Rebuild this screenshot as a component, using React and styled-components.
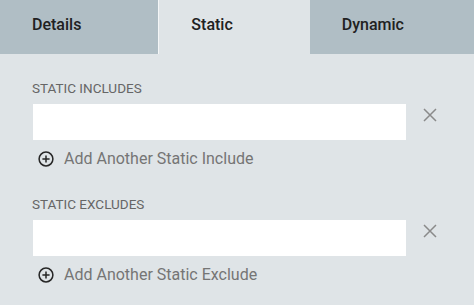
import styled, { createGlobalStyle } from "styled-components";

const Global = createGlobalStyle`
  html, body {
    margin: 0;
    padding: 0;
    background: #dfe4e7;
  }
  body {
    font-family: Roboto, "Liberation Sans", sans-serif;
  }
`;

const Page = styled.div`
  width: 474px;
  height: 305px;
  background: #dfe4e7;
  overflow: hidden;
`;

const Tabs = styled.div`
  display: flex;
  height: 54px;
`;

const Tab = styled.div`
  box-sizing: border-box;
  height: 54px;
  line-height: 50px;
  padding: 0 77px 0 32px;
  font-size: 16px;
  font-weight: 500;
  color: #212121;
  white-space: nowrap;
  background: ${(p) => (p.active ? "#dfe4e7" : "#b0bec5")};
  border-left: ${(p) => (p.active ? "1px solid #f4f6f7" : "none")};
  flex: ${(p) => (p.last ? "1" : "none")};
`;

const Body = styled.div`
  padding: 26px 37px 0 32px;
`;

const Section = styled.div`
  margin-bottom: 27px;
`;

const Label = styled.div`
  font-size: 13.5px;
  line-height: 16px;
  color: #666;
  text-transform: uppercase;
  margin-bottom: 8px;
`;

const Row = styled.div`
  display: flex;
  align-items: flex-start;
  gap: 17px;
`;

const Input = styled.input`
  box-sizing: border-box;
  flex: 1;
  height: 36px;
  margin-left: 1px;
  border: none;
  outline: none;
  background: #fff;
  padding: 0 12px;
  font-family: inherit;
  font-size: 15px;
`;

const Remove = styled.button`
  width: 14px;
  height: 24px;
  padding: 0;
  margin-top: -1px;
  border: none;
  background: none;
  display: flex;
  align-items: center;
  justify-content: center;
  cursor: pointer;
`;

const AddRow = styled.div`
  display: flex;
  align-items: center;
  gap: 10px;
  margin-top: 9px;
  padding-left: 6px;
  font-size: 16px;
  line-height: 20px;
  color: #757575;
`;

const CloseIcon = () => (
  <svg width="14" height="14" viewBox="0 0 14 14">
    <path d="M1 1L13 13M13 1L1 13" stroke="#8a8a8a" strokeWidth="1.5" fill="none" />
  </svg>
);

const PlusIcon = () => (
  <svg width="16" height="16" viewBox="0 0 16 16">
    <circle cx="8" cy="8" r="6.9" stroke="#262626" strokeWidth="1.5" fill="none" />
    <path d="M8 4.4V11.6M4.4 8H11.6" stroke="#262626" strokeWidth="1.5" />
  </svg>
);

const Group = ({ label, add }) => (
  <Section>
    <Label>{label}</Label>
    <Row>
      <Input type="text" />
      <Remove aria-label="Remove">
        <CloseIcon />
      </Remove>
    </Row>
    <AddRow>
      <PlusIcon />
      <span>{add}</span>
    </AddRow>
  </Section>
);

export default function App() {
  return (
    <Page>
      <Global />
      <Tabs>
        <Tab>Details</Tab>
        <Tab active>Static</Tab>
        <Tab last>Dynamic</Tab>
      </Tabs>
      <Body>
        <Group label="Static Includes" add="Add Another Static Include" />
        <Group label="Static Excludes" add="Add Another Static Exclude" />
      </Body>
    </Page>
  );
}
